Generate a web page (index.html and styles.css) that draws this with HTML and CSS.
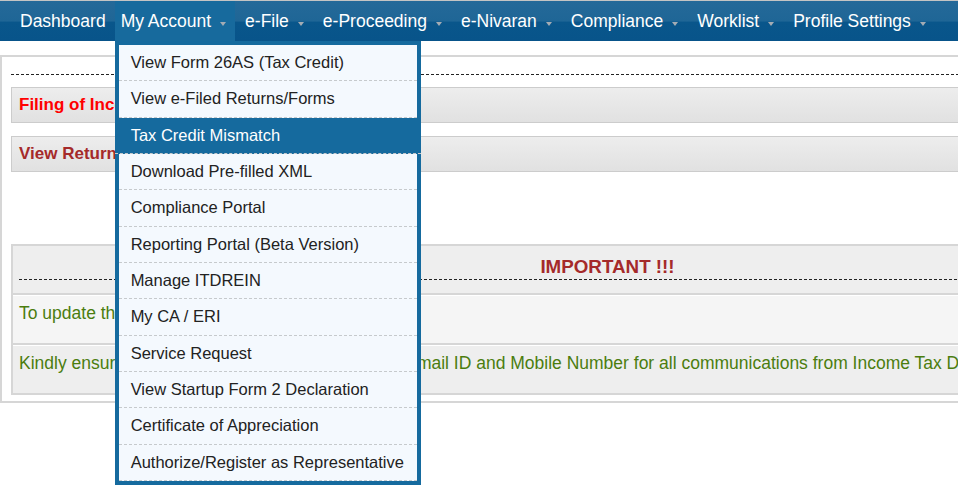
FILE: index.html
```html
<!DOCTYPE html>
<html>
<head>
<meta charset="utf-8">
<link rel="stylesheet" href="styles.css">
</head>
<body>
<nav class="topnav">
  <ul class="menu">
    <li class="menu-item"><span class="label">Dashboard</span></li>
    <li class="menu-item has-sub active"><span class="label">My Account</span><span class="caret"></span>
      <ul class="dropdown">
        <li>View Form 26AS (Tax Credit)</li>
        <li>View e-Filed Returns/Forms</li>
        <li class="hover">Tax Credit Mismatch</li>
        <li>Download Pre-filled XML</li>
        <li>Compliance Portal</li>
        <li>Reporting Portal (Beta Version)</li>
        <li>Manage ITDREIN</li>
        <li>My CA / ERI</li>
        <li>Service Request</li>
        <li>View Startup Form 2 Declaration</li>
        <li>Certificate of Appreciation</li>
        <li>Authorize/Register as Representative</li>
      </ul>
    </li>
    <li class="menu-item has-sub"><span class="label">e-File</span><span class="caret"></span></li>
    <li class="menu-item has-sub"><span class="label">e-Proceeding</span><span class="caret"></span></li>
    <li class="menu-item has-sub"><span class="label">e-Nivaran</span><span class="caret"></span></li>
    <li class="menu-item has-sub"><span class="label">Compliance</span><span class="caret"></span></li>
    <li class="menu-item has-sub"><span class="label">Worklist</span><span class="caret"></span></li>
    <li class="menu-item has-sub"><span class="label">Profile Settings</span><span class="caret"></span></li>
  </ul>
</nav>

<div class="page">
  <main class="panel">
    <div class="rule"></div>
    <div class="bar bar-red">Filing of Income Tax Return</div>
    <div class="bar bar-brown">View Returns / Forms</div>

    <div class="notice">
      <div class="notice-row notice-head">
        <div class="notice-title">IMPORTANT !!!</div>
        <div class="notice-rule"></div>
      </div>
      <div class="notice-row notice-light">To update the contact details</div>
      <div class="notice-row">Kindly ensure that you have updated your correct Email ID and Mobile Number for all communications from Income Tax Department.</div>
    </div>
  </main>
</div>
</body>
</html>
```
FILE: styles.css
```css
body {
  margin: 0;
  padding: 0;
  min-height: 496px;
  background: #ffffff;
  font-family: "Liberation Sans", Arial, sans-serif;
}

.topnav {
  position: relative;
  z-index: 5;
  height: 41px;
  border-top: 1px solid #c4c4c4;
  box-sizing: border-box;
  background: linear-gradient(to bottom, #246999 0%, #1f6696 50%, #09568b 53%, #08548a 100%);
}

.menu {
  list-style: none;
  margin: 0;
  padding: 0 0 0 14px;
  display: flex;
  height: 40px;
}

.menu-item {
  position: relative;
  display: flex;
  align-items: center;
  padding: 0 9px 0 6px;
  color: #ffffff;
  font-size: 17.5px;
  height: 40px;
}

.menu-item.has-sub {
  margin-right: 4px;
}

.menu-item.active {
  background: #176a9d;
}

.caret {
  display: inline-block;
  width: 0;
  height: 0;
  margin-left: 9px;
  margin-top: 5px;
  border-top: 4px solid #a4acb4;
  border-left: 3.5px solid transparent;
  border-right: 3.5px solid transparent;
}

.dropdown {
  position: absolute;
  top: 40px;
  left: 0;
  width: 306px;
  box-sizing: border-box;
  margin: 0;
  padding: 0;
  list-style: none;
  border: 4px solid #156a9e;
  background: #f4f9fe;
  z-index: 10;
}

.dropdown li {
  height: 35.33px;
  border-bottom: 1px dashed #c6cacd;
  display: flex;
  align-items: center;
  padding: 0 12px;
  font-size: 16.5px;
  color: #222222;
}

.dropdown li.hover {
  background: #156a9e;
  color: #ffffff;
  margin: 0 -4px;
  padding: 0 16px;
}

.page {
  overflow: hidden;
  padding-top: 14px;
}

.panel {
  display: block;
  width: 1206px;
  box-sizing: border-box;
  border: 2px solid #d6d6d6;
  padding: 17px 0 6px 9px;
}

.rule {
  border-top: 1px dashed #222222;
  margin-bottom: 12px;
}

.bar {
  height: 34px;
  border: 1px solid #cccccc;
  background: linear-gradient(to bottom, #ededed, #e1e1e1);
  display: flex;
  align-items: center;
  padding: 0 7px;
  font-weight: bold;
  font-size: 17px;
  margin-bottom: 13px;
}

.bar-red {
  color: #ff0000;
}

.bar-brown {
  color: #a52a2a;
  margin-bottom: 0;
}

.notice {
  margin-top: 72px;
  border: 2px solid #d6d6d6;
  border-bottom: 0;
}

.notice-row {
  background: #eeeeee;
  border-bottom: 2px solid #d6d6d6;
  border-top: 1px solid #ffffff;
  padding: 7px 6px 20px;
  line-height: 20px;
  font-size: 17.5px;
  color: #4b7d0e;
}

.notice-light {
  background: #f5f5f5;
}

.notice-head {
  padding: 11px 0 13px 6px;
  border-top: 0;
}

.notice-title {
  text-align: center;
  font-weight: bold;
  font-size: 18.8px;
  color: #a52a2a;
  line-height: 20px;
  padding-right: 6px;
}

.notice-rule {
  border-top: 1px dashed #222222;
  margin-top: 2px;
}
```
